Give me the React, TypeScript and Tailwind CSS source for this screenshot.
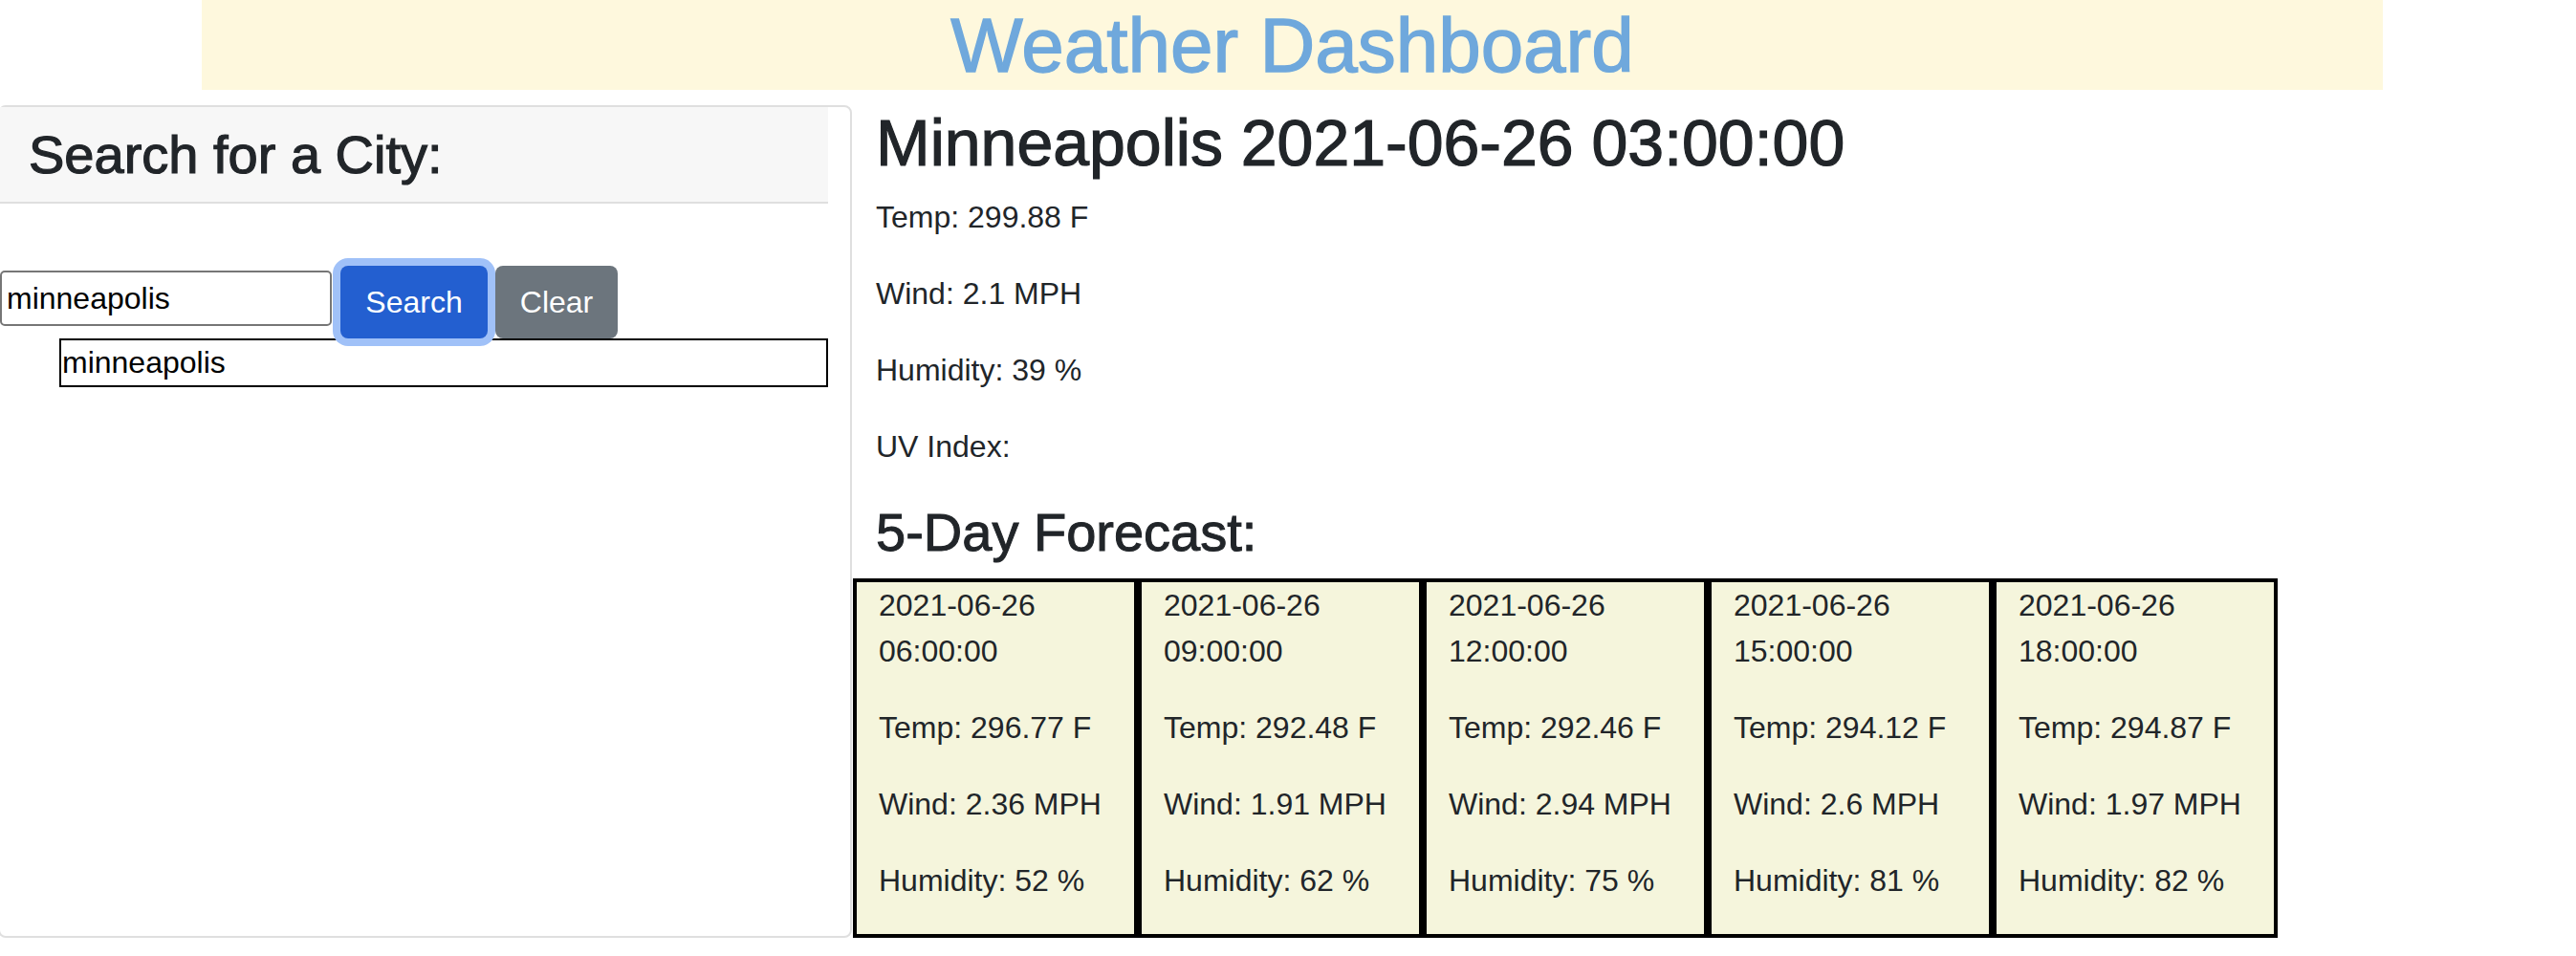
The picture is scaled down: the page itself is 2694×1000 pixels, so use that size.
import React from 'react';

type Forecast = { time: string; temp: string; wind: string; humidity: string };

const forecast: Forecast[] = [
  { time: '2021-06-26 06:00:00', temp: '296.77', wind: '2.36', humidity: '52' },
  { time: '2021-06-26 09:00:00', temp: '292.48', wind: '1.91', humidity: '62' },
  { time: '2021-06-26 12:00:00', temp: '292.46', wind: '2.94', humidity: '75' },
  { time: '2021-06-26 15:00:00', temp: '294.12', wind: '2.6', humidity: '81' },
  { time: '2021-06-26 18:00:00', temp: '294.87', wind: '1.97', humidity: '82' },
];

function ForecastCard({ day }: { day: Forecast }) {
  return (
    <div className="w-[298px] shrink-0 border-4 border-black bg-[#f5f5dc] px-[23px] text-[32px] leading-[48px]">
      <p className="mb-[32px]">{day.time}</p>
      <p className="mb-[32px]">Temp: {day.temp} F</p>
      <p className="mb-[32px]">Wind: {day.wind} MPH</p>
      <p className="mb-[32px]">Humidity: {day.humidity} %</p>
    </div>
  );
}

export default function App() {
  return (
    <div className="min-h-screen bg-white text-[#212529] font-['Liberation_Sans',Arial,sans-serif]">
      {/* banner */}
      <header className="ml-[211px] w-[2281px] h-[94px] overflow-hidden bg-[#fef8dd]">
        <h1 className="text-center text-[80px] leading-[96px] text-[#6fa8dc] [-webkit-text-stroke:1.4px_#6fa8dc]">
          Weather Dashboard
        </h1>
      </header>

      <main className="mt-[16px] flex items-stretch">
        {/* search card */}
        <aside className="-ml-[2px] w-[893px] shrink-0 rounded-[8px] border-2 border-[#dfdfdf] pr-[23px]">
          <div className="border-b-2 border-[#dfdfdf] bg-[#f7f7f7] px-[30px] py-[16px]">
            <h3 className="text-[56px] leading-[67px] [-webkit-text-stroke:1.2px_#212529]">Search for a City:</h3>
          </div>

          <form className="mt-[65px] flex items-start" onSubmit={(e) => e.preventDefault()}>
            <input
              defaultValue="minneapolis"
              className="mt-[5px] h-[58px] w-[347px] rounded-[5px] border-2 border-[#767676] pl-[5px] text-[32px] text-black outline-none"
            />
            <button
              type="submit"
              className="ml-[9px] h-[76px] w-[154px] rounded-[8px] bg-[#235fd0] text-[32px] text-white shadow-[0_0_0_8px_#a0c1f8]"
            >
              Search
            </button>
            <button type="button" className="ml-[8px] h-[76px] w-[128px] rounded-[8px] bg-[#6c757d] text-[32px] text-white">
              Clear
            </button>
          </form>

          <ul className="ml-[62px]">
            <li className="h-[51px] border-2 border-black pl-[1px] text-[32px] leading-[46px] text-black">minneapolis</li>
          </ul>
        </aside>

        {/* current + forecast */}
        <section className="pl-[25px]">
          <h2 className="-mt-[2px] mb-[13px] text-[68px] leading-[82px] [-webkit-text-stroke:1.2px_#212529]">
            Minneapolis 2021-06-26 03:00:00
          </h2>
          <div className="text-[32px] leading-[48px]">
            <p className="mb-[32px]">Temp: 299.88 F</p>
            <p className="mb-[32px]">Wind: 2.1 MPH</p>
            <p className="mb-[32px]">Humidity: 39 %</p>
            <p className="mb-[32px]">UV Index:</p>
          </div>
          <h3 className="mb-[15px] text-[56px] leading-[67px] [-webkit-text-stroke:1px_#212529]">5-Day Forecast:</h3>
          <div className="-ml-[24px] flex">
            {forecast.map((d) => (
              <ForecastCard key={d.time} day={d} />
            ))}
          </div>
        </section>
      </main>
    </div>
  );
}
